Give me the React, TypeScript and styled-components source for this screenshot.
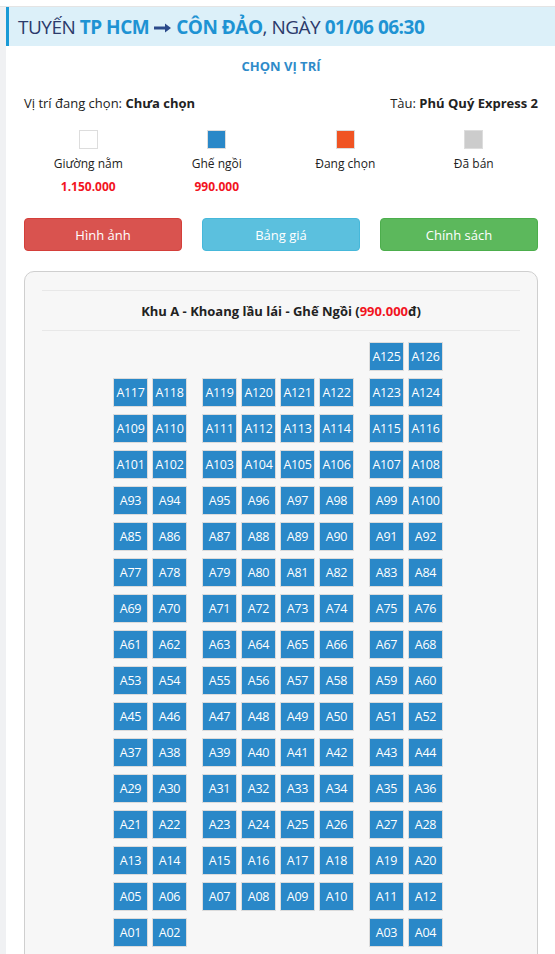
import React from "react";
import styled, { createGlobalStyle } from "styled-components";

const GlobalStyle = createGlobalStyle`
  html, body {
    margin: 0;
    padding: 0;
    background: #fff;
    font-family: "Open Sans", "Noto Sans", sans-serif;
    color: #222;
  }
  * { box-sizing: border-box; }
`;

const Page = styled.div`
  padding-top: 6px;
`;
const Frame = styled.div`
  display: flex;
  border-top: 1px solid #e4e4e4;
  min-height: 948px;
`;
const SideStrip = styled.div`
  width: 6px;
  flex-shrink: 0;
  background: #f0f1f3;
`;
const Main = styled.div`
  flex-grow: 1;
  min-width: 0;
`;
const Header = styled.div`
  height: 39px;
  display: flex;
  align-items: center;
  padding-left: 9px;
  background: #dcf0f9;
  border-left: 3px solid #1a9ad6;
  font-size: 19px;
  color: #2b3a6b;
  white-space: nowrap;
  letter-spacing: -0.5px;
`;
const Hl = styled.b`
  color: #1e93d3;
  font-weight: 700;
`;
const ArrowIcon = styled.svg`
  margin: 2px 5px 0 5px;
  flex-shrink: 0;
`;
const Body = styled.div`
  padding: 0 17px 0 18px;
`;
const SectionTitle = styled.div`
  text-align: center;
  font-size: 13px;
  font-weight: 700;
  color: #2f8bc9;
  margin-top: 11px;
`;
const InfoRow = styled.div`
  display: flex;
  justify-content: space-between;
  font-size: 13px;
  margin-top: 19px;
  color: #222;
`;
const Legend = styled.div`
  display: grid;
  grid-template-columns: repeat(4, 1fr);
  margin-top: 18px;
`;
const LegendItem = styled.div`
  display: flex;
  flex-direction: column;
  align-items: center;
  font-size: 12px;
`;
const Swatch = styled.div<{ $color: string }>`
  width: 19px;
  height: 19px;
  background: ${(p) => p.$color};
  border: 1px solid #ddd;
`;
const LegendLabel = styled.div`
  margin-top: 6px;
  height: 18px;
`;
const LegendPrice = styled.div`
  margin-top: 5px;
  height: 18px;
  font-weight: 700;
  color: #f2141e;
`;
const Buttons = styled.div`
  display: grid;
  grid-template-columns: repeat(3, 1fr);
  gap: 20px;
  margin-top: 22px;
`;
const Btn = styled.button<{ $bg: string; $border: string }>`
  height: 33px;
  border-radius: 4px;
  border: 1px solid ${(p) => p.$border};
  background: ${(p) => p.$bg};
  color: #fff;
  font-family: inherit;
  font-size: 13px;
`;
const SeatPanel = styled.div`
  margin-top: 20px;
  border: 1px solid #cfcfcf;
  border-radius: 10px;
  background: #f7f7f7;
  padding: 18px 17px 20px;
`;
const PanelTitle = styled.div`
  border-top: 1px solid #e8e8e8;
  border-bottom: 1px solid #e8e8e8;
  height: 41px;
  display: flex;
  align-items: center;
  justify-content: center;
  font-size: 13px;
  font-weight: 700;
  color: #222;
`;
const Red = styled.span`
  color: #f2141e;
`;
const SeatGrid = styled.div`
  display: flex;
  flex-direction: column;
  align-items: center;
  gap: 7px;
  margin-top: 11px;
  padding-right: 6px;
`;
const SeatRow = styled.div`
  display: flex;
  gap: 15px;
`;
const Group = styled.div<{ $count: number }>`
  display: flex;
  gap: 4px;
  width: ${(p) => p.$count * 35 + (p.$count - 1) * 4}px;
`;
const Seat = styled.div`
  width: 35px;
  height: 29px;
  display: flex;
  align-items: center;
  justify-content: center;
  background: #2a88c8;
  border: 1px solid #dcdcdc;
  color: #fff;
  font-size: 12.5px;
  letter-spacing: -0.3px;
`;

const label = (n: number) => "A" + (n < 10 ? "0" + n : String(n));

type RowDef = [number[], number[], number[]];

const rows: RowDef[] = [[[], [], [125, 126]]];
for (let b = 117; b >= 5; b -= 8) {
  rows.push([
    [b, b + 1],
    [b + 2, b + 3, b + 4, b + 5],
    [b + 6, b + 7],
  ]);
}
rows.push([[1, 2], [], [3, 4]]);

const legend = [
  { color: "#fff", label: "Giường nằm", price: "1.150.000" },
  { color: "#2a88c8", label: "Ghế ngồi", price: "990.000" },
  { color: "#f05423", label: "Đang chọn", price: "" },
  { color: "#cccccc", label: "Đã bán", price: "" },
];

export default function App() {
  return (
    <Page>
      <GlobalStyle />
      <Frame>
        <SideStrip />
        <Main>
          <Header>
            TUYẾN&nbsp;<Hl>TP HCM</Hl>
            <ArrowIcon width="17" height="10" viewBox="0 0 17 10">
              <path d="M0 3.6h11V0.5L17 5l-6 4.5V6.4H0z" fill="#2b4a8b" />
            </ArrowIcon>
            <Hl>CÔN ĐẢO</Hl>, NGÀY&nbsp;<Hl>01/06 06:30</Hl>
          </Header>
          <Body>
            <SectionTitle>CHỌN VỊ TRÍ</SectionTitle>
            <InfoRow>
              <span>
                Vị trí đang chọn: <b>Chưa chọn</b>
              </span>
              <span>
                Tàu: <b>Phú Quý Express 2</b>
              </span>
            </InfoRow>
            <Legend>
              {legend.map((l) => (
                <LegendItem key={l.label}>
                  <Swatch $color={l.color} />
                  <LegendLabel>{l.label}</LegendLabel>
                  <LegendPrice>{l.price}</LegendPrice>
                </LegendItem>
              ))}
            </Legend>
            <Buttons>
              <Btn $bg="#d9534f" $border="#d43f3a">Hình ảnh</Btn>
              <Btn $bg="#5bc0de" $border="#46b8da">Bảng giá</Btn>
              <Btn $bg="#5cb85c" $border="#4cae4c">Chính sách</Btn>
            </Buttons>
            <SeatPanel>
              <PanelTitle>
                Khu A - Khoang lầu lái - Ghế Ngồi (<Red>990.000</Red>đ)
              </PanelTitle>
              <SeatGrid>
                {rows.map((r, i) => (
                  <SeatRow key={i}>
                    {r.map((g, j) => (
                      <Group key={j} $count={j === 1 ? 4 : 2}>
                        {g.map((n) => (
                          <Seat key={n}>{label(n)}</Seat>
                        ))}
                      </Group>
                    ))}
                  </SeatRow>
                ))}
              </SeatGrid>
            </SeatPanel>
          </Body>
        </Main>
      </Frame>
    </Page>
  );
}
